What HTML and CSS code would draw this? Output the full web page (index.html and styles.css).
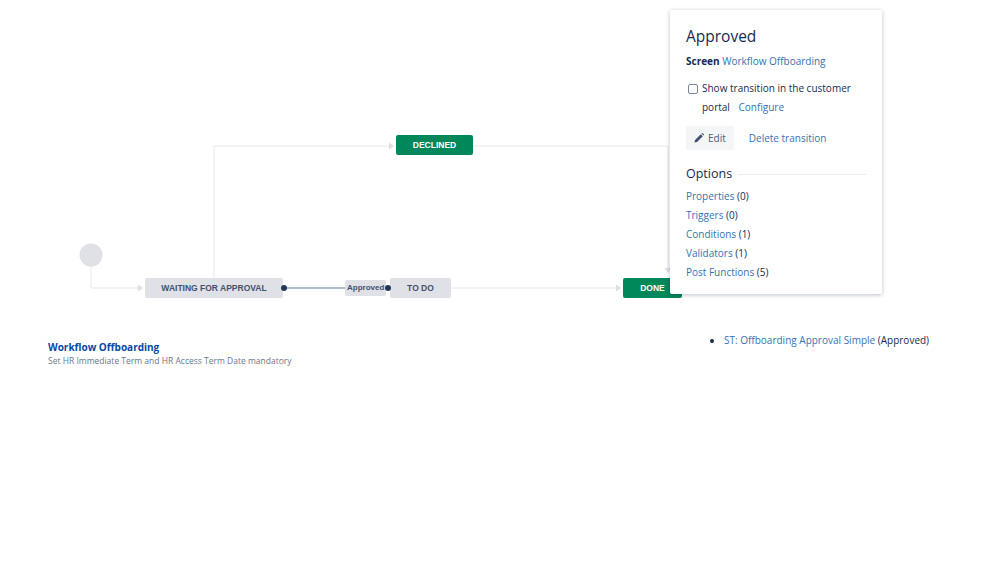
FILE: index.html
```html
<!DOCTYPE html>
<html lang="en">
  <head>
    <meta charset="UTF-8" />
    <title>Workflow Offboarding</title>
    <link rel="stylesheet" href="styles.css">
  </head>
  <body>
    <div class="canvas">
      <svg class="edges" width="999" height="320" viewBox="0 0 999 320">
        <!-- start -> waiting -->
        <polyline points="91,266 91,288 138,288" class="edge" />
        <polygon points="138,284.5 143,288 138,291.5" class="arrow" />
        <!-- waiting -> declined -->
        <polyline points="214,278 214,146 389,146" class="edge" />
        <polygon points="389,142.5 394,146 389,149.5" class="arrow" />
        <!-- declined -> done -->
        <polyline points="473,146 668,146 668,268" class="edge" />
        <polygon points="664.5,268 668,273 671.5,268" class="arrow" />
        <!-- to do -> done -->
        <polyline points="451,288 616,288" class="edge" />
        <polygon points="616,284.5 621,288 616,291.5" class="arrow" />
        <!-- selected transition -->
        <line x1="284" y1="288" x2="345" y2="288" class="edge-active" />
        <!-- start node -->
        <circle cx="91" cy="255" r="11.5" class="start" />
      </svg>

      <div class="node status-grey" style="left:145px;top:278px;width:138px">WAITING FOR APPROVAL</div>
      <div class="node status-grey" style="left:390px;top:278px;width:61px">TO DO</div>
      <div class="node status-green" style="left:396px;top:135px;width:77px">DECLINED</div>
      <div class="node status-green" style="left:623px;top:278px;width:59px">DONE</div>
      <div class="transition-label" style="left:345px;top:280px">Approved</div>

      <svg class="edges" width="999" height="320" viewBox="0 0 999 320">
        <circle cx="284" cy="288" r="3" class="dot" />
        <circle cx="388" cy="288" r="3" class="dot" />
      </svg>

      <div class="popover">
        <h3>Approved</h3>
        <div class="screen-row"><b>Screen</b> <a href="#">Workflow Offboarding</a></div>
        <div class="portal-row">
          <span class="checkbox"></span>
          <div class="portal-text">
            <div>Show transition in the customer</div>
            <div>portal <a href="#" class="configure">Configure</a></div>
          </div>
        </div>
        <div class="actions">
          <button class="edit-btn">
            <svg width="10" height="10" viewBox="0 0 10 10"><path d="M0.5 9.5 L1 7 L6.8 1.2 L8.8 3.2 L3 9 Z M7.5 0.5 L8.3 -0.3 L10.3 1.7 L9.5 2.5 Z" fill="#42526e"/></svg>
            Edit
          </button>
          <a href="#">Delete transition</a>
        </div>
        <div class="options-title"><span>Options</span></div>
        <ul class="options">
          <li><a href="#">Properties</a> (0)</li>
          <li><a href="#">Triggers</a> (0)</li>
          <li><a href="#">Conditions</a> (1)</li>
          <li><a href="#">Validators</a> (1)</li>
          <li><a href="#">Post Functions</a> (5)</li>
        </ul>
      </div>
    </div>

    <div class="summary">
      <div class="workflow-info">
        <a href="#" class="workflow-name">Workflow Offboarding</a>
        <div class="workflow-desc">Set HR Immediate Term and HR Access Term Date mandatory</div>
      </div>
      <ul class="schemes">
        <li><a href="#">ST: Offboarding Approval Simple</a> (Approved)</li>
      </ul>
    </div>
  </body>
</html>
```

FILE: styles.css
```css
/* Base */
* {
  box-sizing: border-box;
}
body {
  margin: 0;
  font-family: "Open Sans", "Noto Sans", sans-serif;
  font-size: 10px;
  color: #172b4d;
  background: white;
}
a {
  color: #3572b0;
  text-decoration: none;
}

/* Diagram */
.canvas {
  position: relative;
  height: 330px;
}
.edges {
  position: absolute;
  left: 0;
  top: 0;
  pointer-events: none;
}
.edge {
  fill: none;
  stroke: #e6e8eb;
  stroke-width: 1;
}
.arrow {
  fill: #dcdfe4;
}
.edge-active {
  stroke: #5a7a9a;
  stroke-width: 1;
}
.dot {
  fill: #253858;
}
.start {
  fill: #dfe1e6;
}
.node {
  position: absolute;
  height: 20px;
  line-height: 20px;
  border-radius: 2px;
  text-align: center;
  font-family: "Liberation Sans", Arial, sans-serif;
  font-size: 8.5px;
  font-weight: bold;
}
.status-grey {
  background-color: #dfe1e6;
  color: #42526e;
}
.status-green {
  background-color: #00875a;
  color: white;
}
.transition-label {
  position: absolute;
  width: 41px;
  height: 16px;
  line-height: 16px;
  padding-left: 2px;
  white-space: nowrap;
  overflow: hidden;
  background-color: #dfe1e6;
  border-radius: 2px;
  font-family: "Liberation Sans", Arial, sans-serif;
  font-size: 8px;
  font-weight: bold;
  color: #42526e;
}

/* Popover */
.popover {
  position: absolute;
  left: 670px;
  top: 10px;
  width: 212px;
  height: 284px;
  padding: 15px 16px;
  background: white;
  border-radius: 2px;
  box-shadow: 0 1px 4px rgba(9, 30, 66, 0.28);
}
.popover h3 {
  margin: 0;
  font-size: 15.5px;
  font-weight: normal;
  line-height: 22px;
}
.screen-row {
  margin-top: 4px;
  line-height: 20px;
}
.portal-row {
  display: flex;
  margin-top: 8px;
  line-height: 19px;
}
.checkbox {
  flex: none;
  width: 10px;
  height: 10px;
  margin: 5px 4px 0 2px;
  border: 1px solid #7a869a;
  border-radius: 2px;
}
.portal-text {
  color: #172b4d;
}
.configure {
  margin-left: 6px;
}
.actions {
  display: flex;
  align-items: center;
  gap: 15px;
  margin-top: 9px;
}
.edit-btn {
  display: flex;
  align-items: center;
  gap: 4px;
  height: 24px;
  padding: 0 8px;
  border: none;
  border-radius: 3px;
  background: #f4f5f7;
  color: #505f79;
  font-family: inherit;
  font-size: 10px;
}
.options-title {
  display: flex;
  align-items: center;
  gap: 6px;
  margin-top: 15px;
  font-size: 12.5px;
  line-height: 18px;
}
.options-title::after {
  content: "";
  flex: 1;
  height: 1px;
  background: #ebecf0;
}
.options {
  list-style: none;
  margin: 4px 0 0;
  padding: 0;
}
.options li {
  line-height: 19px;
}

/* Summary */
.summary {
  display: flex;
  padding-left: 48px;
}
.workflow-info {
  width: 630px;
  padding-top: 10px;
}
.workflow-name {
  display: block;
  font-size: 10px;
  font-weight: bold;
  color: #0747a6;
  line-height: 15px;
}
.workflow-desc {
  font-size: 8.5px;
  color: #6b778c;
  line-height: 12px;
}
.schemes {
  margin: 0;
  padding-left: 46px;
  line-height: 20px;
}
```
